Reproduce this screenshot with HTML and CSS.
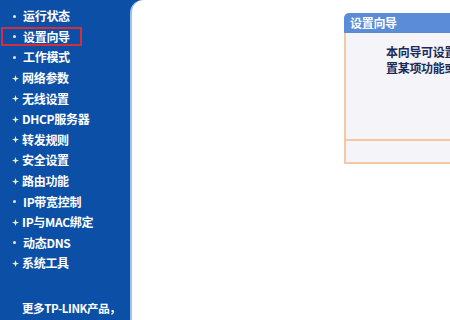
FILE: index.html
```html
<!DOCTYPE html>
<html lang="zh-CN">
<head>
<meta charset="utf-8">
<link rel="stylesheet" href="styles.css">
</head>
<body>
<div class="page">
  <nav class="side">
    <ul class="menu">
      <li class="item"><span class="dot"></span><span class="label">运行状态</span></li>
      <li class="item selected"><span class="sel"><span class="dot"></span><span class="label">设置向导</span></span></li>
      <li class="item"><span class="dot"></span><span class="label">工作模式</span></li>
      <li class="item"><svg class="star" viewBox="0 0 8 8"><path d="M4 0 L5 3 L8 4 L5 5 L4 8 L3 5 L0 4 L3 3 Z"/></svg><span class="label">网络参数</span></li>
      <li class="item"><svg class="star" viewBox="0 0 8 8"><path d="M4 0 L5 3 L8 4 L5 5 L4 8 L3 5 L0 4 L3 3 Z"/></svg><span class="label">无线设置</span></li>
      <li class="item"><svg class="star" viewBox="0 0 8 8"><path d="M4 0 L5 3 L8 4 L5 5 L4 8 L3 5 L0 4 L3 3 Z"/></svg><span class="label">DHCP服务器</span></li>
      <li class="item"><svg class="star" viewBox="0 0 8 8"><path d="M4 0 L5 3 L8 4 L5 5 L4 8 L3 5 L0 4 L3 3 Z"/></svg><span class="label">转发规则</span></li>
      <li class="item"><svg class="star" viewBox="0 0 8 8"><path d="M4 0 L5 3 L8 4 L5 5 L4 8 L3 5 L0 4 L3 3 Z"/></svg><span class="label">安全设置</span></li>
      <li class="item"><svg class="star" viewBox="0 0 8 8"><path d="M4 0 L5 3 L8 4 L5 5 L4 8 L3 5 L0 4 L3 3 Z"/></svg><span class="label">路由功能</span></li>
      <li class="item"><span class="dot"></span><span class="label">IP带宽控制</span></li>
      <li class="item"><svg class="star" viewBox="0 0 8 8"><path d="M4 0 L5 3 L8 4 L5 5 L4 8 L3 5 L0 4 L3 3 Z"/></svg><span class="label">IP与MAC绑定</span></li>
      <li class="item"><span class="dot"></span><span class="label">动态DNS</span></li>
      <li class="item"><svg class="star" viewBox="0 0 8 8"><path d="M4 0 L5 3 L8 4 L5 5 L4 8 L3 5 L0 4 L3 3 Z"/></svg><span class="label">系统工具</span></li>
    </ul>
    <p class="more">更多TP-LINK产品，<br>请点击查看 &gt;&gt;</p>
  </nav>
  <main class="main">
    <section class="panel">
      <h2 class="panel-head">设置向导</h2>
      <div class="panel-body">
        <p class="intro">本向导可设置上网所需的基本网络参数，请单击“下一步”继续。若要详细设<br>置某项功能或参数，请点击左侧相关栏目。</p>
      </div>
      <div class="panel-foot"></div>
    </section>
  </main>
</div>
</body>
</html>
```
FILE: styles.css
```css
html, body {
  margin: 0;
  padding: 0;
  width: 450px;
  height: 320px;
  overflow: hidden;
  background: #ffffff;
  font-family: "Noto Sans CJK SC", "Liberation Sans", sans-serif;
}

.page {
  display: flex;
  width: 450px;
  height: 320px;
  background: #0c4fa6;
}

.side {
  width: 130px;
  flex: none;
  background: #0c4fa6;
  color: #ffffff;
}

.menu {
  list-style: none;
  margin: 0;
  padding: 6px 0 0 0;
}

.item {
  display: flex;
  align-items: center;
  height: 20.6px;
  padding-left: 12px;
  font-size: 12px;
  font-weight: bold;
  line-height: 14px;
  letter-spacing: -0.3px;
}

.item.selected {
  padding-left: 1px;
}

.sel {
  display: flex;
  align-items: center;
  width: 68px;
  height: 15px;
  padding-left: 9px;
  border: 2px solid #d3303c;
}

.dot {
  width: 3px;
  height: 3px;
  border-radius: 50%;
  background: #e4ecd0;
  margin: 0 7px 0 1px;
  flex: none;
}

.star {
  width: 7px;
  height: 7px;
  fill: #eef2b8;
  margin: 0 3px 0 0;
  flex: none;
}

.more {
  margin: 25px 0 0 22px;
  font-size: 11.5px;
  font-weight: bold;
  line-height: 18px;
  letter-spacing: -0.4px;
}

.main {
  flex: 1;
  background: #ffffff;
  border-left: 2px solid #9cc1f0;
  border-top-left-radius: 13px;
  overflow: hidden;
  padding: 13px 0 0 212px;
}

.panel {
  width: 320px;
}

.panel-head {
  margin: 0;
  height: 20px;
  background: #5b8cd8;
  border-radius: 5px 5px 0 0;
  color: #ffffff;
  font-size: 12px;
  font-weight: bold;
  line-height: 19px;
  padding-left: 6px;
  letter-spacing: -0.3px;
}

.panel-body {
  height: 106px;
  background: #f4f4f9;
  border-left: 2px solid #f5c8a2;
  border-bottom: 2px solid #f5c8a2;
}

.intro {
  margin: 0;
  padding: 11px 0 0 40px;
  font-size: 12px;
  font-weight: bold;
  line-height: 16px;
  color: #1a2a5a;
  white-space: nowrap;
  letter-spacing: -0.3px;
}

.panel-foot {
  height: 21px;
  background: #f4f4f9;
  border-left: 2px solid #f5c8a2;
  border-bottom: 2px solid #f5c8a2;
}
```
